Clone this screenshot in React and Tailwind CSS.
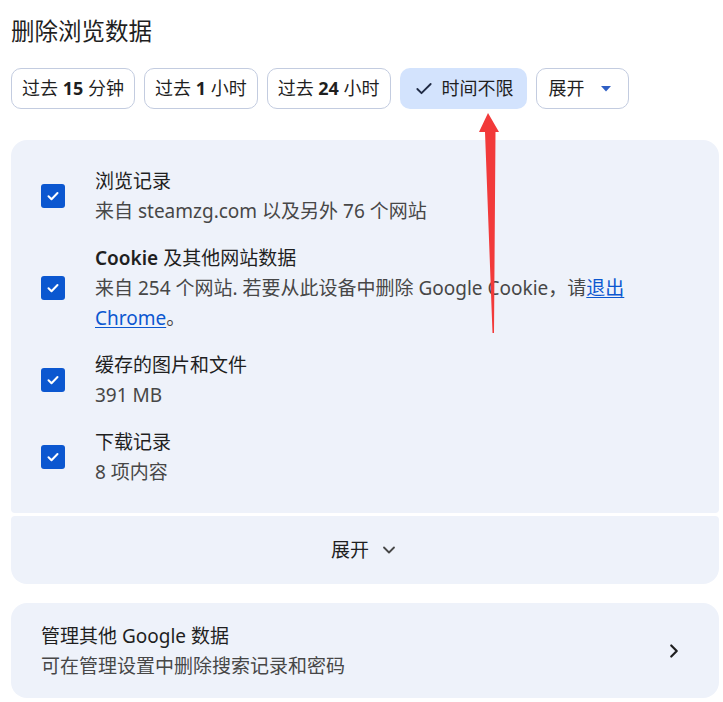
import { Check, ChevronDown, ChevronRight } from 'lucide-react';

const FONT = { fontFamily: '"Noto Sans", "Noto Sans CJK SC", sans-serif' };

const RANGES = [
  { num: '15', post: '分钟' },
  { num: '1', post: '小时' },
  { num: '24', post: '小时' },
];

function Box() {
  return (
    <span className="w-[24px] h-[24px] rounded-[3px] bg-[#0b57d0] flex items-center justify-center flex-shrink-0">
      <svg className="w-[16px] h-[16px]" viewBox="0 0 16 16" fill="none">
        <path d="M3.5 8.3l3 3 6-6.3" stroke="white" strokeWidth="2" strokeLinecap="round" strokeLinejoin="round" />
      </svg>
    </span>
  );
}

function Row({ title, children }) {
  return (
    <div className="flex items-center gap-[30px]">
      <Box />
      <div className="flex-1 leading-[30px] text-[19px]">
        <div className="text-[#1f1f1f]">{title}</div>
        <div className="text-[#474747]">{children}</div>
      </div>
    </div>
  );
}

export default function App() {
  return (
    <div className="relative bg-white w-[723px] h-[702px] pl-[11px] pr-[4px] pt-[14px] overflow-hidden" style={FONT}>
      <h1 className="text-[23.5px] leading-[34px] text-[#1f1f1f]">删除浏览数据</h1>

      <div className="flex gap-[9px] mt-[20px]">
        {RANGES.map((r, i) => (
          <button key={i} className="h-[41px] px-[10px] rounded-[10px] border border-[#c3cce0] text-[18px] text-[#1f1f1f] flex items-center">
            <span>过去 <b className="font-bold">{r.num}</b> {r.post}</span>
          </button>
        ))}
        <button className="h-[41px] pl-[14px] pr-[13px] rounded-[10px] bg-[#d3e3fd] text-[18px] text-[#1f1f1f] flex items-center gap-[8px]">
          <Check className="w-[20px] h-[20px] text-[#1f2a44]" strokeWidth={2.2} />
          时间不限
        </button>
        <button className="h-[41px] pl-[12px] pr-[17px] rounded-[10px] border border-[#c3cce0] text-[18px] text-[#1f1f1f] flex items-center gap-[16px]">
          展开
          <svg className="w-[10px] h-[6px]" viewBox="0 0 10 6"><path d="M0 0h10L5 5.5z" fill="#2f5fc4" /></svg>
        </button>
      </div>

      <div className="mt-[31px] bg-[#eef2fa] rounded-t-[16px] rounded-b-[4px] pl-[30px] pr-[20px] pt-[26px] pb-[26px] flex flex-col gap-[17px]">
        <Row title="浏览记录">来自 steamzg.com 以及另外 76 个网站</Row>
        <Row title={<><span className="font-semibold">Cookie</span> 及其他网站数据</>}>
          来自 254 个网站. 若要从此设备中删除 Google Cookie，请<a className="text-[#0b57d0] underline underline-offset-2">退出 Chrome</a>。
        </Row>
        <Row title="缓存的图片和文件">391 MB</Row>
        <Row title="下载记录">8 项内容</Row>
      </div>

      <button className="mt-[3px] w-full h-[68px] bg-[#eef2fa] rounded-t-[4px] rounded-b-[16px] flex items-center justify-center gap-[10px] text-[19px] text-[#1f1f1f]">
        展开
        <ChevronDown className="w-[20px] h-[20px] text-[#474747]" strokeWidth={2.2} />
      </button>

      <div className="mt-[19px] h-[95px] bg-[#eef2fa] rounded-[16px] pl-[30px] pr-[34px] flex items-center">
        <div className="flex-1 leading-[30px] text-[19px]">
          <div className="text-[#1f1f1f]">管理其他 Google 数据</div>
          <div className="text-[#474747]">可在管理设置中删除搜索记录和密码</div>
        </div>
        <ChevronRight className="w-[22px] h-[22px] text-[#1f1f1f]" strokeWidth={2.4} />
      </div>

      {/* annotation arrow */}
      <svg className="absolute left-0 top-0 pointer-events-none" width="723" height="702" viewBox="0 0 723 702">
        <polygon points="488,113 499,132 495.5,132 494,333 492.5,333 485,132 479,132" fill="#f23a3a" />
      </svg>
    </div>
  );
}
